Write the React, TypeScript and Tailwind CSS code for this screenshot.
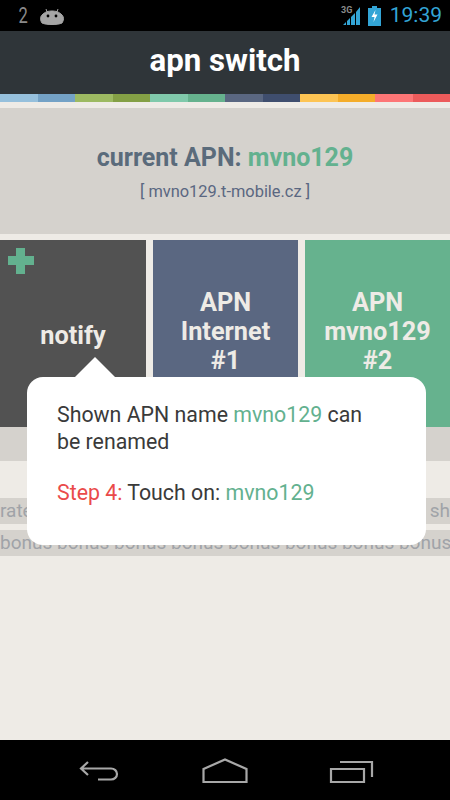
export default function App() {
  const stripes = ["#96c0dc","#74a2c6","#9dba62","#84a045","#80c9ab","#66b28e","#5a6781","#3f4e6e","#fdc453","#f5ad2a","#fd7676","#ec5b5b"];
  return (
    <div className="relative w-[450px] h-[800px] overflow-hidden bg-[#eeebe6] flex flex-col font-['Roboto',sans-serif]">
      <div className="h-[31px] bg-black flex items-center text-[#33a5d6] shrink-0">
        <span className="ml-[17px] text-[#8a8a8a] text-[22px] leading-none scale-x-75">2</span>
        <svg className="ml-[11px]" width="24" height="18" viewBox="0 0 24 18">
          <path d="M2 16 C0 13 0 10 2 8 C5 4.5 9 4 12 4 C15 4 19 4.5 22 8 C24 10 24 13 22 16 C18 18 6 18 2 16 Z M6 2 L7.5 6 M18 2 L16.5 6" fill="#a5a5a5" stroke="#a5a5a5" strokeWidth="1" />
          <circle cx="8" cy="9" r="1.4" fill="#000" /><circle cx="16" cy="9" r="1.4" fill="#000" />
        </svg>
        <div className="ml-auto flex items-center">
          <svg width="19" height="20" viewBox="0 0 19 20">
            <path d="M1 19 L4 16 V19 Z M5 15 L8 12 V19 H5 Z M9 11 L13 7 V19 H9 Z M14 6 L18 1 V19 H14 Z" fill="#33a5d6" />
          </svg>
          <svg className="ml-[7px]" width="13" height="20" viewBox="0 0 13 20">
            <path d="M4 0 H9 V2 H13 V20 H0 V2 H4 Z" fill="#33a5d6" />
            <path d="M7.5 4 L3.5 11 H6.5 L5.5 16 L9.5 8.5 H6.5 Z" fill="#fff" />
          </svg>
          <span className="ml-[9px] mr-[8px] text-[21px] leading-none">19:39</span>
        </div>
      </div>
      <span className="absolute left-[341px] top-[6px] text-[9px] leading-none font-bold text-[#8a8a8a]">3G</span>
      <div className="h-[63px] bg-[#2f3539] flex items-center justify-center shrink-0 text-white text-[31.2px] font-bold leading-none pb-1">apn switch</div>
      <div className="h-[8px] flex shrink-0">
        {stripes.map((c) => <div key={c} className="flex-1" style={{ backgroundColor: c }} />)}
      </div>
      <div className="mt-[6px] h-[126px] bg-[#d5d2cd] flex flex-col items-center shrink-0">
        <div className="mt-[35px] text-[25px] leading-[30px] font-bold text-[#5a6b7b]">current APN: <span className="text-[#63b18f]">mvno129</span></div>
        <div className="mt-[9px] text-[16.4px] leading-[20px] text-[#5a6781]">[ mvno129.t-mobile.cz ]</div>
      </div>
      <div className="mt-[6px] h-[187px] flex justify-between shrink-0 text-[#eeebe6] font-bold text-[25.3px] leading-[29px] text-center">
        <div className="relative w-[146px] bg-[#525252] pt-[81px]">
          <div className="absolute left-[8px] top-[8px] w-[26px] h-[26px]">
            <div className="absolute left-[8px] top-0 w-[9px] h-[26px] bg-[#63b18f]" />
            <div className="absolute left-0 top-[8px] w-[26px] h-[9px] bg-[#63b18f]" />
          </div>
          notify
        </div>
        <div className="w-[145px] bg-[#5a6781] pt-[48px]">APN<br />Internet<br />#1</div>
        <div className="w-[145px] bg-[#66b28e] pt-[48px]">APN<br />mvno129<br />#2</div>
      </div>
      <div className="h-[34px] bg-[#d5d2cd] shrink-0" />
      <div className="mt-[37px] h-[26px] bg-[#d5d2cd] shrink-0 flex justify-between items-center overflow-hidden text-[19px] text-[#a0a3a8] whitespace-nowrap">
        <span>rate</span><span>sh</span>
      </div>
      <div className="mt-[6px] h-[26px] bg-[#d5d2cd] shrink-0 flex items-center overflow-hidden text-[19px] text-[#a0a3a8] whitespace-nowrap">
        bonus bonus bonus bonus bonus bonus bonus bonus
      </div>
      <div className="absolute left-0 right-0 bottom-0 h-[60px] bg-black flex">
        <svg className="absolute left-[78px] top-[19px]" width="44" height="26" viewBox="0 0 44 26" fill="none" stroke="#a8a8a8" strokeWidth="2.2">
          <path d="M10 3 L3 9.5 L10 16 M3 9.5 H33 C36.5 9.5 39 12 39 15 C39 18 36.5 20.5 33 20.5 H20" />
        </svg>
        <svg className="absolute left-[202px] top-[18px]" width="46" height="26" viewBox="0 0 46 26" fill="none" stroke="#a8a8a8" strokeWidth="2.2">
          <path d="M1.5 11 L23 1.5 L44.5 11 V24 H1.5 Z" />
        </svg>
        <svg className="absolute left-[329px] top-[20px]" width="46" height="26" viewBox="0 0 46 26" fill="none" stroke="#a8a8a8" strokeWidth="2.2">
          <path d="M2 9 H35 V22 H2 Z M11 2 H43 V17" />
        </svg>
      </div>
      <div className="absolute left-[27px] top-[377px] w-[399px] h-[168px] bg-white rounded-[16px] pl-[30px] pr-[30px] pt-[25px] text-[21.33px] leading-[26.5px] text-[#3a3a3a]">
        <svg className="absolute left-[47px] top-[-20px]" width="42" height="21" viewBox="0 0 42 21"><path d="M0 21 L21 0 L42 21 Z" fill="#fff" /></svg>
        <div>Shown APN name <span className="text-[#63b18f]">mvno129</span> can<br />be renamed</div>
        <div className="mt-[25px]"><span className="text-[#ea4a4a]">Step 4:</span> Touch on: <span className="text-[#63b18f]">mvno129</span></div>
      </div>
    </div>
  );
}
